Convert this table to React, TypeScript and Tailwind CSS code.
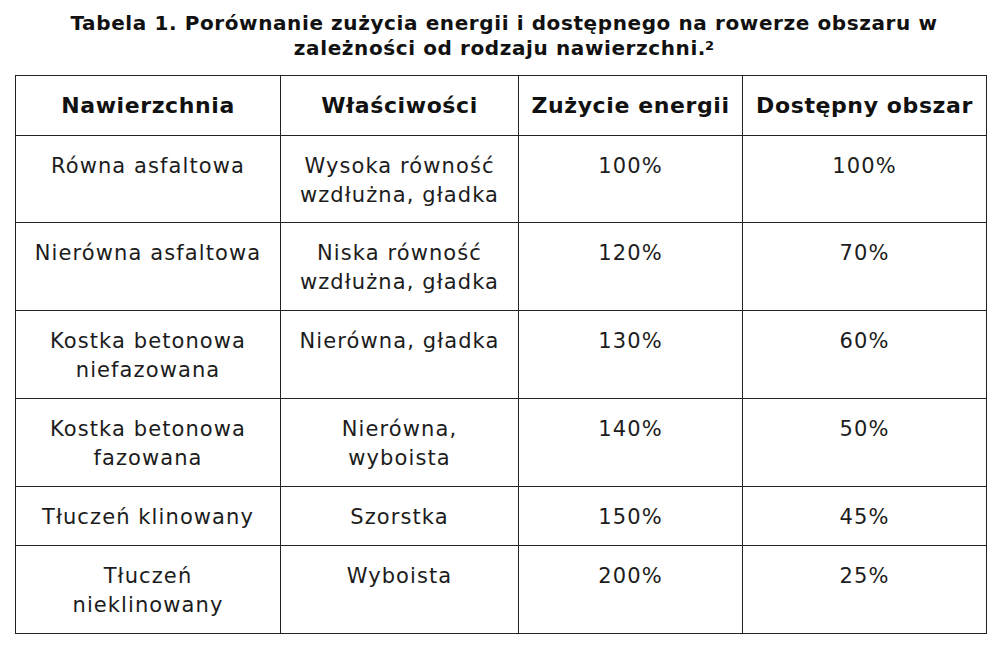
import React from "react";

const rows: [string, string, string, string][] = [
  ["Równa asfaltowa", "Wysoka równość\nwzdłużna, gładka", "100%", "100%"],
  ["Nierówna asfaltowa", "Niska równość\nwzdłużna, gładka", "120%", "70%"],
  ["Kostka betonowa\nniefazowana", "Nierówna, gładka", "130%", "60%"],
  ["Kostka betonowa\nfazowana", "Nierówna,\nwyboista", "140%", "50%"],
  ["Tłuczeń klinowany", "Szorstka", "150%", "45%"],
  ["Tłuczeń\nnieklinowany", "Wyboista", "200%", "25%"],
];

const heights = ["h-[87px]", "h-[88px]", "h-[88px]", "h-[88px]", "h-[59px]", "h-[88px]"];

export default function App() {
  return (
    <div
      className="w-[1000px] h-[652px] bg-white text-[#1c1c1c] overflow-hidden"
      style={{ fontFamily: '"DejaVu Sans", Verdana, sans-serif' }}
    >
      <div className="pt-[11px] text-center font-bold text-[20px] leading-[25px] tracking-[0.6px] text-[#111] pl-[8px]">
        Tabela 1. Porównanie zużycia energii i dostępnego na rowerze obszaru w
        <br />
        zależności od rodzaju nawierzchni.
        <span className="text-[13px] tracking-normal align-top relative top-[-3px] ml-[-1px]">2</span>
      </div>
      <table className="ml-[15px] mt-[14px] w-[971px] border-collapse table-fixed">
        <colgroup>
          <col className="w-[265px]" />
          <col className="w-[238px]" />
          <col className="w-[224px]" />
          <col className="w-[244px]" />
        </colgroup>
        <thead>
          <tr className="h-[60px]">
            {["Nawierzchnia", "Właściwości", "Zużycie energii", "Dostępny obszar"].map((h) => (
              <th
                key={h}
                className="border border-[#222] align-top pt-[15px] pb-[14px] px-0 text-center font-bold text-[22px] leading-[29px] tracking-[0.6px] text-[#111] whitespace-nowrap"
              >
                {h}
              </th>
            ))}
          </tr>
        </thead>
        <tbody>
          {rows.map((r, i) => (
            <tr key={i} className={heights[i]}>
              {r.map((c, j) => (
                <td
                  key={j}
                  className="border border-[#222] align-top pt-[16px] pb-[11px] px-0 text-center text-[21px] leading-[29px] tracking-[1.1px] whitespace-pre-line"
                >
                  {c}
                </td>
              ))}
            </tr>
          ))}
        </tbody>
      </table>
    </div>
  );
}
